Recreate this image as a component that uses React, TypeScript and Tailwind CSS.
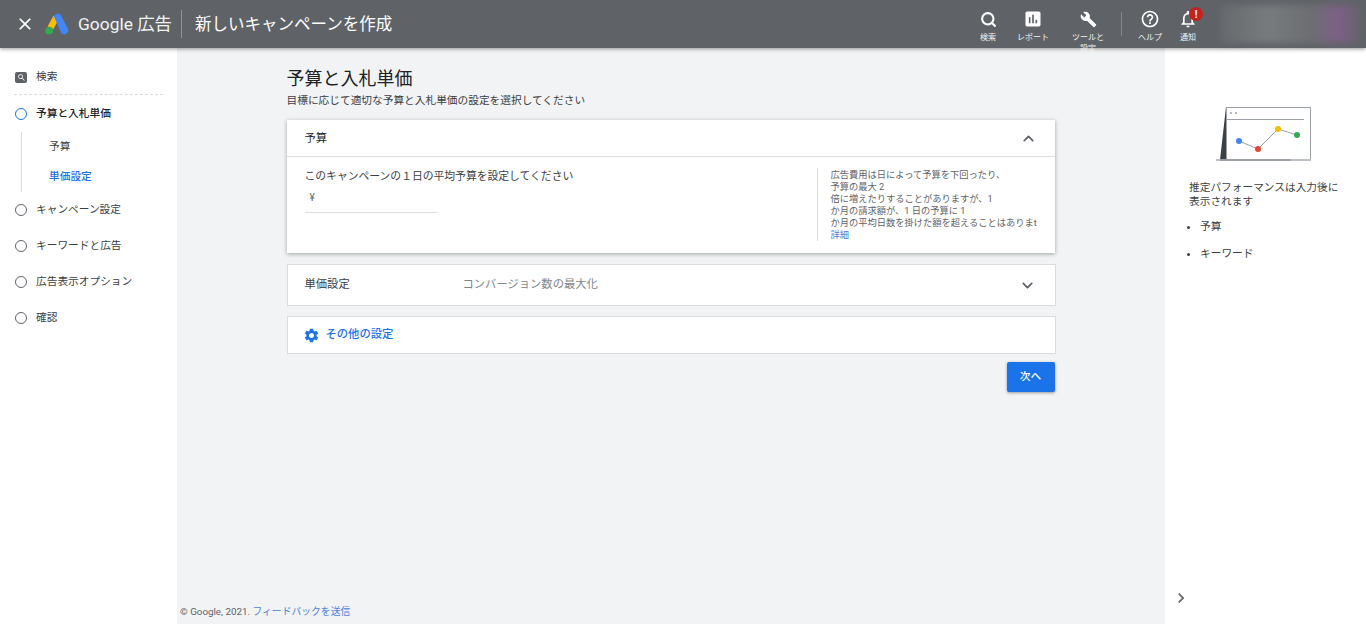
import { MdClose, MdSearch, MdAssessment, MdBuild, MdHelpOutline, MdNotificationsNone, MdSettings, MdChevronRight } from "react-icons/md";
import { ChevronDown, ChevronUp, Search } from "lucide-react";

const FONT = "[font-family:Roboto,'Noto_Sans_CJK_JP',sans-serif]";
const STEPS = ["キャンペーン設定", "キーワードと広告", "広告表示オプション", "確認"];
const TIP = [
  "広告費用は日によって予算を下回ったり、",
  "予算の最大 2",
  "倍に増えたりすることがありますが、1",
  "か月の請求額が、1 日の予算に 1",
  "か月の平均日数を掛けた額を超えることはありまt",
];

function AdsLogo() {
  return (
    <svg width="24" height="22" viewBox="0 0 24 22" className="shrink-0">
      <path d="M8.6 2.6 L2.6 13.6 L8.4 16.2 L12.2 9 Z" fill="#fbbc04" />
      <path d="M9 3.6 A3.9 3.9 0 0 1 15.8 1.9 L22.8 15.6 A3.9 3.9 0 0 1 16 19.4 Z" fill="#4285f4" />
      <circle cx="4.2" cy="17.6" r="3.9" fill="#34a853" />
    </svg>
  );
}

function HeaderAction({ icon, label, width }: { icon: React.ReactNode; label: React.ReactNode; width: string }) {
  return (
    <div className={`flex flex-col items-center self-start pt-[9px] ${width}`}>
      <div className="flex h-5 items-center">{icon}</div>
      <span className="mt-[3px] text-center text-[8px] leading-[11px] whitespace-nowrap text-[#f1f3f4]">{label}</span>
    </div>
  );
}

function Header() {
  return (
    <header className="relative z-10 flex h-12 shrink-0 items-center bg-[#5f6368] shadow-[0_1px_4px_rgba(0,0,0,0.4)]">
      <MdClose className="ml-[15px] text-white" size={20} />
      <div className="ml-[10px]">
        <AdsLogo />
      </div>
      <span className="ml-[9px] text-[17.4px] whitespace-nowrap text-[#f1f3f4]">Google 広告</span>
      <div className="ml-[9px] h-7 w-px bg-[#8f9397]" />
      <span className="mt-[2px] ml-[13px] text-[16.5px] whitespace-nowrap text-white">新しいキャンペーンを作成</span>

      <div className="ml-auto flex h-full items-center">
        <HeaderAction width="w-[44px]" label="検索" icon={<Search size={17} strokeWidth={3} className="text-white" />} />
        <HeaderAction width="w-[46px]" label="レポート" icon={<MdAssessment size={20} className="text-white" />} />
        <HeaderAction
          width="w-[64px]"
          label={
            <>
              ツールと
              <br />
              設定
            </>
          }
          icon={<MdBuild size={17} className="text-white" />}
        />
        <div className="mr-[5px] ml-[1px] h-6 w-px bg-[#85898d]" />
        <HeaderAction width="w-[46px]" label="ヘルプ" icon={<MdHelpOutline size={20} className="text-white" />} />
        <div className="relative ml-[-8px] self-start">
          <HeaderAction width="w-[46px]" label="通知" icon={<MdNotificationsNone size={20} className="text-white" />} />
          <span className="absolute top-[7px] left-[24px] flex h-[14px] w-[14px] items-center justify-center rounded-full bg-[#c5221f] text-[10px] font-bold text-white">
            !
          </span>
        </div>
        <div className="mr-[6px] ml-[9px] h-[38px] w-[140px] bg-[linear-gradient(90deg,#666a6e_0%,#777b7d_35%,#6c6e72_65%,#7e5f86_85%,#66626a_100%)] blur-[3px]" />
      </div>
    </header>
  );
}

function StepCircle({ active }: { active?: boolean }) {
  return (
    <span className={`h-3 w-3 shrink-0 rounded-full border-[1.5px] bg-white ${active ? "border-[#1a73e8]" : "border-[#5f6368]"}`} />
  );
}

function Sidebar() {
  return (
    <aside className="flex w-[177px] shrink-0 flex-col bg-white text-[10.7px] text-[#3c4043]">
      <div className="mx-[14px] flex h-[47px] items-center gap-[9px] border-b border-dashed border-[#dadce0] pt-[13px]">
        <span className="ml-px flex h-[11px] w-[12px] items-center justify-center rounded-[2px] bg-[#5f6368]">
          <MdSearch size={9} className="text-white" />
        </span>
        <span>検索</span>
      </div>
      <div className="mt-px flex h-[36px] items-center gap-[9px] pl-[15px] font-medium text-[#202124]">
        <StepCircle active />
        <span>予算と入札単価</span>
      </div>
      <div className="ml-[21px] flex h-[60px] flex-col border-l border-[#dadce0] pl-[27px]">
        <span className="flex h-[30px] items-center">予算</span>
        <span className="flex h-[30px] items-center font-medium text-[#1a73e8]">単価設定</span>
      </div>
      {STEPS.map((s) => (
        <div key={s} className="flex h-[36px] items-center gap-[9px] pl-[15px]">
          <StepCircle />
          <span>{s}</span>
        </div>
      ))}
    </aside>
  );
}

function BudgetCard() {
  return (
    <section className="mt-[11px] h-[133px] w-[768px] bg-white shadow-[0_1px_4px_rgba(60,64,67,0.45)]">
      <div className="flex h-[37px] items-center justify-between border-b border-[#dadce0] pr-[18px] pl-[18px]">
        <span className="mt-[2px] text-[11.3px] text-[#202124]">予算</span>
        <ChevronUp size={17} strokeWidth={2.5} className="text-[#5f6368]" />
      </div>
      <div className="flex pt-[11px] pl-[18px]">
        <div className="w-[512px]">
          <p className="mt-[1px] text-[10.8px] leading-[15px] whitespace-nowrap text-[#3c4043]">
            このキャンペーンの１日の平均予算を設定してください
          </p>
          <div className="mt-[6px] h-[23px] w-[132px] border-b border-[#dadce0] pt-px pl-[5px] text-[10px] leading-[14px] text-[#5f6368]">¥</div>
        </div>
        <div className="h-[73px] w-[238px] overflow-hidden border-l border-[#dadce0] pt-px pl-[13px] text-[9.25px] leading-[12px] whitespace-nowrap text-[#5f6368]">
          {TIP.map((t) => (
            <p key={t}>{t}</p>
          ))}
          <p className="text-[#4e7fdc]">詳細</p>
        </div>
      </div>
    </section>
  );
}

function Main() {
  return (
    <main className="flex min-w-0 flex-1 flex-col bg-[#f1f3f4]">
      <div className="mx-auto w-[769px] pt-[19px]">
        <h1 className="text-[18px] leading-[24px] font-normal text-[#202124]">予算と入札単価</h1>
        <p className="mt-[2px] text-[10.7px] leading-[16px] whitespace-nowrap text-[#3c4043]">目標に応じて適切な予算と入札単価の設定を選択してください</p>
        <BudgetCard />
        <section className="mt-[11px] flex h-[42px] items-center border border-[#dadce0] bg-white pr-[19px] pl-[17px]">
          <span className="w-[158px] text-[11.3px] text-[#3c4043]">単価設定</span>
          <span className="text-[11.3px] text-[#80868b]">コンバージョン数の最大化</span>
          <ChevronDown size={17} strokeWidth={2.5} className="ml-auto text-[#5f6368]" />
        </section>
        <section className="mt-[10px] flex h-[38px] items-center gap-[6px] border border-[#dadce0] bg-white pl-[15px]">
          <MdSettings size={17} className="text-[#1a73e8]" />
          <span className="text-[11.3px] font-medium text-[#1a73e8]">その他の設定</span>
        </section>
        <div className="mt-[8px] flex justify-end pr-px">
          <button className="h-[30px] w-[48px] rounded-[2px] bg-[#1a73e8] text-[10.7px] font-medium text-white shadow-[0_1px_3px_rgba(60,64,67,0.5)]">次へ</button>
        </div>
      </div>
      <p className="mt-auto mb-[5px] ml-[3px] text-[9.8px] leading-[14px] text-[#5f6368]">
        © Google, 2021. <span className="text-[#4e7fdc]">フィードバックを送信</span>
      </p>
    </main>
  );
}

function PerformanceArt() {
  return (
    <svg width="100" height="60" viewBox="0 0 100 60" className="mx-auto block">
      <rect x="10.5" y="3.5" width="84" height="52" fill="#fff" stroke="#9aa0a6" />
      <path d="M10 3 L4 56 L10 56 Z" fill="#3c4043" />
      <rect x="0" y="55" width="95" height="2" fill="#bdc1c6" />
      <rect x="4" y="55" width="71" height="2" fill="#9aa0a6" />
      <line x1="11" y1="15.5" x2="88" y2="15.5" stroke="#9aa0a6" />
      <circle cx="15" cy="9" r="1" fill="#9aa0a6" />
      <circle cx="20" cy="9" r="1" fill="#9aa0a6" />
      <polyline points="23,37 42,45 62,25 81,31" fill="none" stroke="#9aa0a6" />
      <circle cx="23" cy="37" r="3" fill="#4285f4" />
      <circle cx="42" cy="45" r="3" fill="#ea4335" />
      <circle cx="62" cy="25" r="3" fill="#fbbc04" />
      <circle cx="81" cy="31" r="3" fill="#34a853" />
    </svg>
  );
}

function RightPanel() {
  return (
    <aside className="flex w-[201px] shrink-0 flex-col bg-white pt-[56px] text-[#3c4043]">
      <PerformanceArt />
      <p className="mt-[17px] pr-[20px] pl-6 text-[10.7px] leading-[14px]">推定パフォーマンスは入力後に表示されます</p>
      <ul className="mt-[5px] text-[10.7px]">
        {["予算", "キーワード"].map((s) => (
          <li key={s} className="flex h-[27px] items-center pl-[22px]">
            <span className="mr-[10px] h-[3px] w-[3px] rounded-full bg-[#3c4043]" />
            {s}
          </li>
        ))}
      </ul>
      <div className="mt-auto mb-[16px] pl-[6px]">
        <MdChevronRight size={20} className="text-[#5f6368]" />
      </div>
    </aside>
  );
}

export default function App() {
  return (
    <div className={`flex h-[624px] w-[1366px] flex-col overflow-hidden ${FONT}`}>
      <Header />
      <div className="flex min-h-0 flex-1">
        <Sidebar />
        <Main />
        <RightPanel />
      </div>
    </div>
  );
}
